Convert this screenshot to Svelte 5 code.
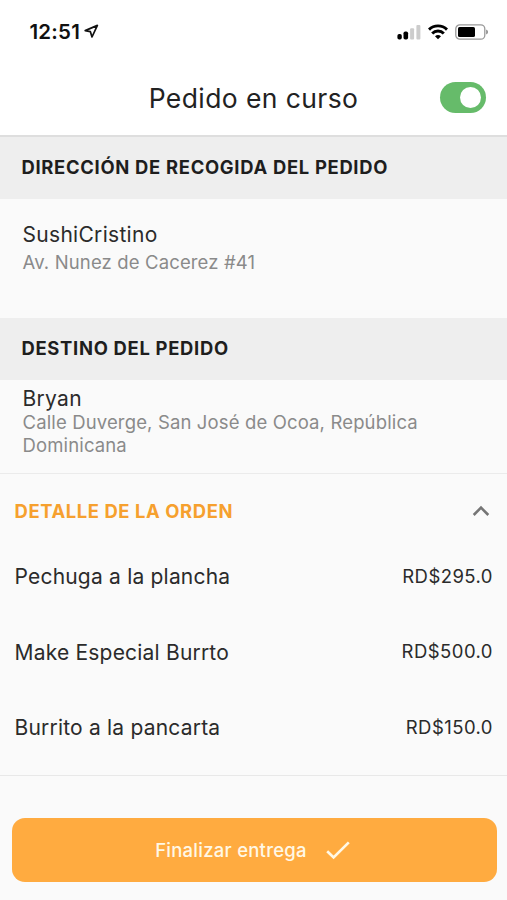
<script>
  let active = true;
  let expanded = true;

  const pickup = { name: 'SushiCristino', address: 'Av. Nunez de Cacerez #41' };
  const destination = {
    name: 'Bryan',
    address: 'Calle Duverge, San José de Ocoa, República Dominicana'
  };

  const items = [
    { name: 'Pechuga a la plancha', price: 295 },
    { name: 'Make Especial Burrto', price: 500 },
    { name: 'Burrito a la pancarta', price: 150 }
  ];
</script>

<div class="screen">
  <div class="status-bar">
    <div class="clock">
      <span class="time">12:51</span>
      <svg class="location" width="15" height="15" viewBox="0 0 15 15" fill="none" stroke="#111" stroke-width="1.7" stroke-linejoin="round">
        <path d="M13.4 1.4 L1.2 6.6 L6.4 7.7 L8 13 Z" />
      </svg>
    </div>
    <div class="indicators">
      <svg width="24" height="16" viewBox="0 0 24 16">
        <rect x="0.4" y="10" width="4.4" height="5.6" rx="1.8" fill="#000" />
        <rect x="6.5" y="7.4" width="4.6" height="8.2" rx="1.8" fill="#000" />
        <rect x="13.1" y="4.2" width="4" height="11.4" rx="1" fill="#ccc" />
        <rect x="19.4" y="0.9" width="4" height="14.7" rx="1" fill="#ccc" />
      </svg>
      <svg class="wifi" width="20" height="16" viewBox="0 0 20 16" fill="none" stroke="#000" stroke-width="2.9">
        <path d="M1 5.6 A12.8 12.8 0 0 1 19 5.6" />
        <path d="M4.2 9.5 A8 8 0 0 1 15.8 9.5" />
        <path d="M10 15.2 L7 12.3 A4.4 4.4 0 0 1 13 12.3 Z" fill="#000" stroke="none" />
      </svg>
      <svg class="battery" width="34" height="16" viewBox="0 0 34 16">
        <rect x="0.8" y="0.8" width="29" height="14.4" rx="4" fill="none" stroke="#999" stroke-width="1.3" />
        <rect x="3" y="3" width="17" height="10" rx="1.6" fill="#000" />
        <path d="M31.2 5.6 Q33 6.2 33 8 Q33 9.8 31.2 10.4 Z" fill="#888" />
      </svg>
    </div>
  </div>

  <header class="app-bar">
    <h1>Pedido en curso</h1>
    <button
      type="button"
      class="toggle"
      class:on={active}
      aria-label="Pedido activo"
      on:click={() => (active = !active)}
    >
      <span class="knob"></span>
    </button>
  </header>

  <h2 class="section-title">DIRECCIÓN DE RECOGIDA DEL PEDIDO</h2>
  <div class="place pickup">
    <div class="name">{pickup.name}</div>
    <div class="address">{pickup.address}</div>
  </div>

  <h2 class="section-title">DESTINO DEL PEDIDO</h2>
  <div class="place destination">
    <div class="name">{destination.name}</div>
    <div class="address">{destination.address}</div>
  </div>

  <section class="order">
    <button type="button" class="order-header" on:click={() => (expanded = !expanded)}>
      <span>DETALLE DE LA ORDEN</span>
      <svg class:collapsed={!expanded} width="18" height="12" viewBox="0 0 18 12" fill="none" stroke="#757575" stroke-width="2.6">
        <path d="M1.7 10 L9 2.7 L16.3 10" />
      </svg>
    </button>
    {#if expanded}
      {#each items as item}
        <div class="item">
          <span class="item-name">{item.name}</span>
          <span class="item-price">RD${item.price.toFixed(1)}</span>
        </div>
      {/each}
    {/if}
  </section>

  <button type="button" class="finish">
    <span>Finalizar entrega</span>
    <svg width="24" height="20" viewBox="0 0 24 20" fill="none" stroke="#fff8e6" stroke-width="2.7">
      <path d="M1.2 11.2 L7.6 17.4 L22.8 2.4" />
    </svg>
  </button>
</div>

<style>
  :global(body) {
    background: #fafafa;
  }

  .screen {
    display: flex;
    flex-direction: column;
    box-sizing: border-box;
    height: 900px;
    background: #fafafa;
    color: #2b2b2b;
    font-family: Inter, 'Liberation Sans', sans-serif;
  }

  button {
    margin: 0;
    padding: 0;
    border: none;
    background: none;
    font-family: inherit;
    cursor: pointer;
  }

  h1,
  h2 {
    margin: 0;
  }

  .status-bar {
    display: flex;
    justify-content: space-between;
    align-items: center;
    box-sizing: border-box;
    height: 64px;
    padding: 0 18px 0 29.5px;
    background: #fff;
  }

  .clock {
    display: flex;
    align-items: center;
    gap: 4px;
    padding-bottom: 1px;
  }

  .time {
    color: #111;
    font-size: 20.5px;
    font-weight: 600;
    line-height: 24px;
    letter-spacing: 0.2px;
  }

  .indicators {
    display: flex;
    align-items: center;
  }

  .wifi {
    margin-left: 7px;
  }

  .battery {
    margin-left: 7px;
  }

  .app-bar {
    display: grid;
    grid-template-columns: 1fr auto 1fr;
    align-items: center;
    box-sizing: border-box;
    height: 73px;
    padding: 0 21px 4px;
    background: #fff;
    border-bottom: 2px solid #dedede;
  }

  .app-bar h1 {
    grid-column: 2;
    color: #222;
    font-size: 26.5px;
    font-weight: 400;
    line-height: 32px;
    letter-spacing: 0.4px;
  }

  .toggle {
    display: flex;
    justify-self: end;
    align-items: center;
    box-sizing: border-box;
    width: 46px;
    height: 31px;
    padding: 0 5px;
    border-radius: 16px;
    background: #bdbdbd;
  }

  .toggle.on {
    justify-content: flex-end;
    background: #66bb6a;
  }

  .knob {
    width: 21px;
    height: 21px;
    border-radius: 50%;
    background: #fff;
  }

  .section-title {
    flex: none;
    box-sizing: border-box;
    height: 62px;
    padding-left: 21.5px;
    background: #eee;
    color: #1e1e1e;
    font-size: 18.4px;
    font-weight: 650;
    line-height: 61px;
    letter-spacing: 0.7px;
  }

  .place {
    box-sizing: border-box;
    padding-left: 22.5px;
    padding-right: 60px;
  }

  .pickup {
    height: 119px;
    padding-top: 23px;
  }

  .destination {
    height: 94px;
    padding-top: 6px;
    border-bottom: 1px solid #ebebeb;
  }

  .name {
    font-size: 21px;
    line-height: 26px;
    letter-spacing: 0.3px;
  }

  .address {
    margin-top: -1px;
    color: #8a8a8a;
    font-size: 18.5px;
    line-height: 23px;
    letter-spacing: 0.14px;
  }

  .pickup .address {
    margin-top: 3px;
  }

  .order {
    box-sizing: border-box;
    height: 302px;
    border-bottom: 1px solid #e8e8e8;
  }

  .order-header {
    display: flex;
    justify-content: space-between;
    align-items: center;
    box-sizing: border-box;
    width: 100%;
    height: 65px;
    padding: 0 17px 0 14.5px;
    color: #f6a02e;
    font-size: 18.4px;
    font-weight: 700;
    letter-spacing: 0.6px;
  }

  .order-header span {
    margin-top: 8px;
  }

  .order-header svg {
    margin-top: 9px;
  }

  .collapsed {
    transform: rotate(180deg);
  }

  .item {
    display: flex;
    justify-content: space-between;
    align-items: center;
    height: 75.5px;
    padding: 0 14px 0 14.5px;
  }

  .item-name {
    font-size: 21px;
    letter-spacing: 0.2px;
  }

  .item-price {
    margin-bottom: 2px;
    font-size: 18.5px;
    letter-spacing: 0.45px;
  }

  .finish {
    display: flex;
    justify-content: center;
    align-items: center;
    gap: 19px;
    height: 64px;
    margin: 42px 10px 0 12px;
    padding-right: 4px;
    border-radius: 13px;
    background: #ffab40;
    color: #fff8e6;
    font-size: 18.5px;
    font-weight: 500;
    letter-spacing: 0.25px;
  }
</style>
